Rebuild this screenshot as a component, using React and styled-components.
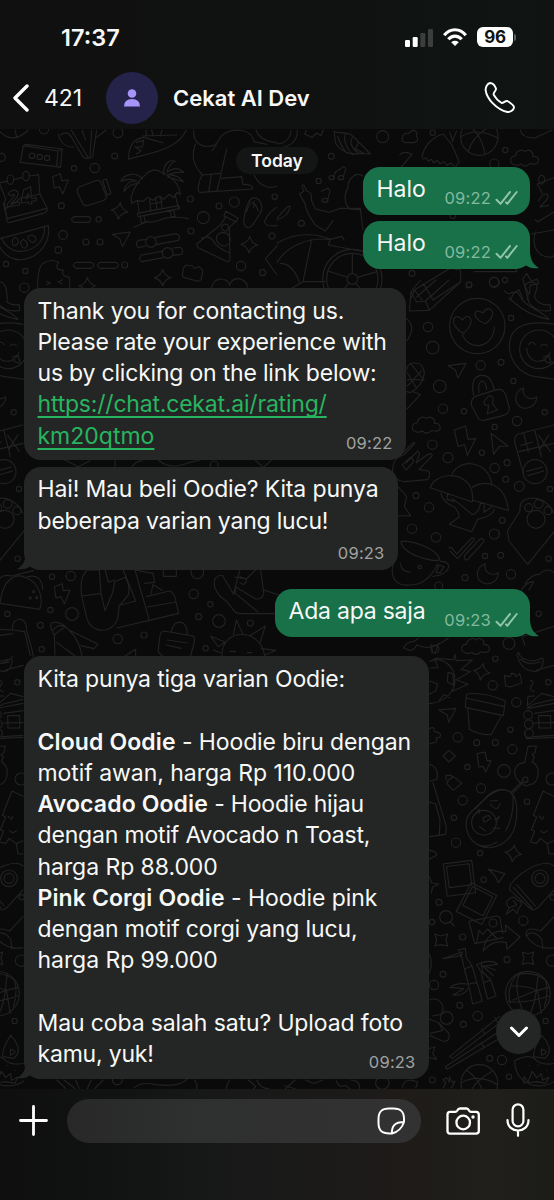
import React from "react";
import styled, { createGlobalStyle } from "styled-components";

const GlobalStyle = createGlobalStyle`
  * {
    box-sizing: border-box;
  }
  body {
    margin: 0;
    background: #0a0a0a;
    font-family: Inter, "Liberation Sans", sans-serif;
    color: #f7f8f7;
  }
`;

const Screen = styled.div`
  width: 554px;
  height: 1200px;
  display: flex;
  flex-direction: column;
  overflow: hidden;
`;

const Header = styled.header`
  height: 129px;
  flex: none;
  background: linear-gradient(90deg, #101010 0%, #101111 55%, #0f1412 85%, #101312 100%);
`;

const StatusBar = styled.div`
  height: 69px;
  padding: 5px 38px 0 61px;
  display: flex;
  align-items: center;
  justify-content: space-between;
`;

const Clock = styled.span`
  font-size: 23.5px;
  font-weight: 600;
  letter-spacing: 0;
`;

const StatusIcons = styled.div`
  display: flex;
  align-items: center;
`;

const Battery = styled.div`
  width: 36px;
  height: 20px;
  margin-left: 10px;
  border-radius: 6px;
  background: #fff;
  color: #101312;
  font-size: 17px;
  font-weight: 700;
  letter-spacing: -0.4px;
  line-height: 20px;
  text-align: center;
`;

const BatteryCap = styled.div`
  width: 2px;
  height: 7px;
  margin-left: 1px;
  border-radius: 0 3px 3px 0;
  background: #5b5e5d;
`;

const NavBar = styled.div`
  height: 58px;
  padding: 0 38px 0 12px;
  display: flex;
  align-items: center;
`;

const UnreadCount = styled.span`
  flex: none;
  width: 77px;
  padding-left: 15px;
  font-size: 23px;
  letter-spacing: -0.1px;
`;

const Avatar = styled.div`
  flex: none;
  width: 52px;
  height: 52px;
  border-radius: 50%;
  background: #25234a;
  display: flex;
  align-items: center;
  justify-content: center;
`;

const ContactName = styled.h1`
  flex: 1;
  margin: 0 0 0 15px;
  font-size: 22px;
  font-weight: 600;
  letter-spacing: 0;
`;

const Chat = styled.main`
  position: relative;
  height: 960px;
  padding: 18px 24px 0;
  display: flex;
  flex-direction: column;
  background: #0a0a0a;
`;

const Wallpaper = styled.svg`
  position: absolute;
  top: 0;
  left: 0;
  fill: none;
  stroke: #222222;
  stroke-width: 3.4;
  stroke-linecap: round;
  stroke-linejoin: round;
`;

const DayPill = styled.div`
  position: relative;
  align-self: center;
  width: 82px;
  height: 27px;
  margin-bottom: -7px;
  border-radius: 14px;
  background: #131615;
  font-size: 17.5px;
  font-weight: 600;
  line-height: 27px;
  text-align: center;
`;

const Bubble = styled.div`
  position: relative;
  display: flex;
  flex-shrink: 0;
  margin-bottom: ${props => props.$gap || 7}px;
  border-radius: 17px;
  font-size: 23px;
`;

const SentBubble = styled(Bubble)`
  align-self: flex-end;
  width: ${props => props.$width}px;
  height: 47.5px;
  padding: 0 12px 0 13.5px;
  justify-content: space-between;
  background: #187149;
`;

const ReceivedBubble = styled(Bubble)`
  align-self: flex-start;
  width: ${props => props.$width}px;
  padding: 7.5px 13.5px 6.5px;
  flex-direction: column;
  background: #242625;
`;

const TailShape = styled.svg`
  position: absolute;
  bottom: 0;
  ${props => (props.$left ? "left: -7px; transform: scaleX(-1);" : "right: -9px;")}
  fill: ${props => (props.$left ? "#242625" : "#187149")};
`;

const SentText = styled.span`
  position: relative;
  line-height: 45px;
  letter-spacing: ${props => props.$spacing || 0}px;
`;

const Meta = styled.span`
  position: relative;
  display: flex;
  align-items: center;
  align-self: flex-end;
  gap: 4px;
  height: 20px;
  margin-bottom: 6.5px;
  font-size: 16.5px;
  letter-spacing: 0.2px;
  color: #84b99e;
`;

const Line = styled.div`
  position: relative;
  height: 31.27px;
  line-height: 31.27px;
  white-space: nowrap;
  letter-spacing: ${props => props.$spacing || 0}px;
`;

const Link = styled.a`
  color: #27b560;
  text-decoration: underline;
  text-decoration-thickness: 1.6px;
  text-underline-offset: 3.5px;
  text-decoration-skip-ink: none;
`;

const Strong = styled.strong`
  font-weight: 600;
  letter-spacing: 0.12px;
`;

const Time = styled.time`
  align-self: flex-end;
  height: 20px;
  margin-top: ${props => (props.$ownRow ? 6.5 : -18.4)}px;
  font-size: 16.5px;
  letter-spacing: 0.2px;
  line-height: 20px;
  color: #a0a2a1;
`;

const ScrollButton = styled.button`
  position: absolute;
  right: 13px;
  bottom: 35px;
  width: 45px;
  height: 45px;
  padding: 0;
  border: 0;
  border-radius: 50%;
  background: #242625;
  display: flex;
  align-items: center;
  justify-content: center;
`;

const Footer = styled.footer`
  height: 111px;
  flex: none;
  padding: 10px 23px 0 19px;
  display: flex;
  align-items: flex-start;
  background: linear-gradient(90deg, #0f0f0f 0%, #111212 20%, #161817 35%, #1b1a19 60%, #1e1b19 72%, #201f1b 88%, #1c1c19 100%);
`;

const Input = styled.div`
  width: 354px;
  height: 44px;
  margin: 0 25px 0 19px;
  padding-right: 16px;
  border-radius: 22px;
  background: linear-gradient(90deg, #282828 0%, #2e2f2f 35%, #333232 100%);
  display: flex;
  align-items: center;
  justify-content: flex-end;
`;

const Icon = styled.svg`
  flex: none;
  fill: none;
  stroke: #fff;
  stroke-width: ${props => props.$weight || 2};
  stroke-linecap: ${props => (props.$butt ? "butt" : "round")};
  stroke-linejoin: round;
  margin-top: ${props => props.$top || 0}px;
  margin-left: ${props => props.$left || 0}px;
`;

const TickIcon = styled(Icon)`
  stroke: #92c4aa;
`;

const Dots = ({ items }) =>
  items.map(([x, y, r]) => <circle key={`${x}-${y}`} cx={x} cy={y} r={r} />);

const Sparkle = ({ x, y, turn = 0 }) => (
  <path
    transform={`translate(${x} ${y}) rotate(${turn})`}
    d="M0-25Q5-6 25 0Q6 5 0 25Q-5 6-25 0Q-6-5 0-25Z"
  />
);

const Bolt = ({ x, y }) => (
  <path transform={`translate(${x} ${y})`} d="M-23-22L0-31L4-10L24-12L7 30L-3 8L-18 12Z" />
);

const Cloud = ({ x, y }) => (
  <path
    transform={`translate(${x} ${y})`}
    d="M-30 22C-47 16-43-4-27-4C-24-20-9-27 2-17C13-29 29-15 25-3C46-5 48 19 32 20C24 22 19 17 16 19C7 29-5 28-10 20C-18 24-24 25-30 22Z"
  />
);

const Moon = ({ x, y }) => (
  <path transform={`translate(${x} ${y})`} d="M-8-30C-38-20-40 18-12 29C8 36 31 20 31-3C8 10-15-7-8-30Z" />
);

const Cursor = ({ x, y, turn = 0 }) => (
  <path transform={`translate(${x} ${y}) rotate(${turn})`} d="M-27-13L27-20L3 24L-5 0Z" />
);

const Ball = ({ x, y, r }) => (
  <g transform={`translate(${x} ${y})`}>
    <circle r={r} />
    <path d={`M${-r * 0.7} ${-r * 0.7}Q8-8 ${r * 0.3} ${r * 0.94}M${r * 0.75} ${-r * 0.65}Q-20-5 ${-r * 0.6} ${r * 0.8}M${-r} 0Q-5-30 ${r} 5`} />
  </g>
);

const Photo = ({ x, y, turn }) => (
  <g transform={`translate(${x} ${y}) rotate(${turn})`}>
    <path d="M-43-46H43V52H-43ZM-34-37H34V27H-34Z" />
  </g>
);

// Doodles are drawn at 3x in bands that follow the height of the chat.
const TopDoodles = () => (
  <g transform="translate(0 1) scale(0.33333)">
    <path d="M70 47L78 43L187 57L181 112L170 110L61 97ZM70 47L174 63L170 110M174 63L187 57" />
    <path d="M0 158L22 154M41 149L66 143M87 138L116 134Q118 180 120 192L141 234Q144 245 130 250L28 278Q19 279 21 266L13 219M120 192Q75 202 62 204L28 230L13 237M0 164L17 206L11 221L21 266L140 235" />
    <ellipse cx="31" cy="149" rx="10" ry="14" />
    <ellipse cx="78" cy="138" rx="10" ry="14" />
    <path d="M24 193C35 171 66 180 50 203L33 220L57 216L59 225L22 231L22 222L43 198Q45 186 34 198ZM71 179L92 170L94 205L109 203L108 212L94 215L96 222L87 222L85 216L64 219V212ZM77 205L85 204V190Z" />
    <path d="M0 326L145 287C159 375 42 430 0 351M5 325C35 397 140 360 133 292M40 346C30 325 50 315 54 330C57 340 50 350 40 346ZM65 348Q57 335 70 328Q90 342 78 353Q69 357 65 348ZM88 332Q76 317 97 315Q116 325 104 335Q96 340 88 332Z" />
    <Bolt x={181} y={162} />
    <path d="M232 186Q230 172 245 168L291 151Q300 150 304 160L318 197Q321 209 308 212L261 227Q250 227 246 216ZM308 151L319 147L333 190L322 196Z" />
    <path d="M175 12Q183 52 221 51M182 15Q200 0 214 20L249 80Q265 91 278 79L290 0M214 0L265 84M246 0L257 30M275 0L270 80M290 22L318 0" />
    <path d="M386 88C385 44 405 25 432 22L490 39M386 88C440 70 533 62 559 0M409 37L431 31L427 51L405 51L423 63L409 72M428 18L530 15M438 0L439 18M455 0L459 18M486 0L481 18" />
    <path d="M393 202Q406 157 436 135Q459 111 484 127Q538 151 541 194L532 187L521 203L507 193L491 208L475 199L459 211L443 202L430 214L411 212L395 220ZM428 147C404 120 370 137 363 154Q388 143 410 153Q377 151 372 184Q390 160 419 159M490 134C491 101 507 87 526 94Q507 101 501 127Q529 105 551 127Q527 124 506 134Q538 136 550 155L503 141M412 210L418 249M525 193L536 234M412 250L536 227L539 236L415 260ZM421 259L424 279L436 277L432 257M510 240L514 261L525 259L521 238M449 208L452 239M466 202L471 236M482 199L486 232M450 222L486 216M402 292L440 275Q460 280 494 265Q530 258 564 266" />
    <Sparkle x={358} y={243} turn={8} />
    <Sparkle x={748} y={344} turn={3} />
    <Sparkle x={488} y={443} />
    <Sparkle x={262} y={468} />
    <path d="M222 260H267Q277 268 267 277H222Q207 268 222 260ZM228 397H273Q290 405 273 415H228Q212 406 228 397ZM300 397H347Q363 405 347 415H300Q285 406 300 397Z" />
    <Cursor x={364} y={326} />
    <path d="M415 331L440 328M467 322L528 311Q544 316 535 331L468 344M436 348L416 353Q402 343 415 331M424 375L486 364M519 354L540 352Q554 359 544 373L520 376M490 383L426 395Q413 389 424 375" />
    <circle cx="453" cy="336" r="16" /><circle cx="503" cy="369" r="16" />
    <path d="M677 244L714 264L709 276L672 258ZM676 262L661 285L590 342Q590 352 601 356L682 395Q691 396 690 384L688 293L706 274M604 325Q627 312 642 336Q650 353 688 368M667 307C636 313 650 350 674 348C698 344 698 311 667 307M673 283C659 287 665 305 679 303C691 298 686 280 673 283" />
    <path d="M731 270Q739 217 756 204C785 199 790 235 781 249L757 286C744 298 731 293 731 270ZM740 244Q756 193 775 243M762 213L761 233M831 232Q807 244 793 276Q796 290 831 287" />
    <path d="M547 438L550 414L558 405L578 408L583 415L597 410L608 421L604 448Q600 455 591 453L553 443Z" />
    <path d="M581 0C579 40 606 57 642 46C658 36 654 26 670 13C700-8 756-4 762 35L800 43M586 42C571 84 584 110 607 135L663 130L680 57M607 135C596 150 590 184 600 187L758 177Q758 162 729 163L725 140L665 145M626 185L634 133M651 182L663 133M636 62L649 45M762 135C780 171 810 177 831 169M768 0Q778 32 831 38" />
    <path d="M115 510Q108 425 126 402Q152 384 176 397Q160 420 190 420Q181 439 208 442L211 510M140 454L151 460L139 464M187 449L175 456L187 462M143 480L154 479" />
    <path d="M635 510C620 430 687 440 689 466C697 429 760 446 740 498M318 480H382M393 480H454M0 456Q20 455 22 510M831 348L796 386L831 435M0 5Q40 45 84 0M45 0L50 22" />
    <Dots items={[[96, 77, 8], [119, 81, 8], [141, 84, 8], [4, 82, 12], [222, 115, 8], [284, 114, 14], [344, 78, 9], [354, 8, 15], [132, -2, 14], [184, 227, 9], [296, 268, 8], [189, 315, 13], [258, 336, 9], [300, 336, 9], [175, 360, 10], [374, 405, 9], [18, 402, 8], [76, 423, 8], [73, 473, 14], [571, 207, 9], [703, 216, 15], [657, 228, 9], [610, 263, 18], [573, 303, 9], [816, 318, 9], [723, 408, 14], [788, 428, 9], [824, 200, 8]]} />
  </g>
);

const UpperRightDoodles = () => (
  <g transform="translate(277 1) scale(0.33333)">
    <path d="M88 0L83 12L105 22L119 9L132 17L139 0M171 4C184 12 209 5 225 16L263 54L280 72L248 70C213 78 185 56 176 39ZM182 18Q190 47 210 71M204 13Q197 38 226 75M227 21Q211 44 244 69M244 38L235 56L259 69M61 0Q62 50 0 55M42 0Q39 39 0 42" />
    <path d="M377 22Q378 8 395 10L408 0Q424 5 418 18Q430 33 409 38H386Q369 33 377 22M435 82Q442 38 484 17L499 12L526 47L547 96L536 109M438 88L448 84L454 94L463 88L470 98L481 91L489 101L501 95L511 106L521 99L530 107M525 36L539 3M518 5L526 30" />
    <Ball x={607} y={20} r={56} />
    <Cloud x={742} y={82} />
    <path d="M730 0Q735 25 774 24L825 0M175 126L200 110L207 116L199 139M175 126L169 145M133 184L154 174L159 184L150 215" />
    <ellipse cx="164" cy="143" rx="8" ry="6" /><ellipse cx="192" cy="143" rx="8" ry="6" /><ellipse cx="144" cy="211" rx="9" ry="6" />
    <path d="M80 215L68 191L80 184L75 166Q82 160 88 183Q106 185 103 210L115 237L157 247L190 235H250L258 300M82 215Q88 249 116 286L145 303L168 272M258 138C231 122 211 153 213 174C201 190 200 220 218 237L247 239M0 340C56 302 130 313 160 328C86 322 29 350 0 397M160 328L154 345L250 363M160 328L194 319L201 329M104 328L78 455L0 500M78 455H145" />
    <circle cx="226" cy="447" r="89" /><circle cx="226" cy="447" r="77" /><circle cx="226" cy="447" r="16" />
    <path d="M226 431V370M241 442L300 425M236 460L272 501M215 459L185 500M210 441L152 423M368 75Q380 60 405 73L371 113M0 265L26 235Q42 222 38 234Q35 257 0 270M10 400Q47 400 68 458" />
    <path d="M400 510L412 480L519 415L551 420V455L468 510M412 480L435 510M440 462L468 510M592 425H720L712 410M700 510L710 489L726 479L737 505M749 431L737 447L744 468L754 489L751 510M749 431L764 454L780 447L785 461L759 466L758 492" />
    <path d="M781 162L831 143M781 162L796 190M785 213C796 188 820 184 811 207L789 231L815 226M831 246L781 276L775 268M775 306C755 385 831 390 831 374M762 312L831 300" />
    <ellipse cx="794" cy="149" rx="9" ry="13" />
    <Dots items={[[317, 20, 18], [163, 79, 9], [125, 153, 8], [73, 280, 9], [685, 60, 8], [652, 101, 14], [467, 8, 8], [405, 430, 9], [576, 464, 8], [651, 456, 14], [684, 450, 8], [527, 258, 8]]} />
  </g>
);

const RightDoodles = () => (
  <g transform="translate(377 151) scale(0.33333)">
    <path d="M102 35L97 93L157 91L247 9M102 35L131 0M157 91L145 63L119 66L102 35M119 51L177 0M145 63L216 0" />
    <circle cx="301" cy="138" r="83" />
    <path d="M259 160C212 135 229 90 257 120C274 92 303 124 259 160ZM325 131C280 116 289 79 318 99C335 68 370 101 325 131ZM256 163C274 213 349 209 352 140" />
    <path d="M382 32Q394 47 403 38Q424 32 430 50C448 85 492 89 516 118Q455 107 413 69L395 53M444 22C445 0 481 2 480 24L472 49Q484 79 519 74L521 91Q480 99 456 69Z" />
    <path d="M531 133C450 119 397 139 397 199C398 238 424 282 476 290L560 301" />
    <circle cx="486" cy="208" r="58" />
    <path d="M455 193Q465 180 475 194M492 198Q501 186 511 198M449 205C452 255 505 254 519 218M499 231L516 225L522 246Q511 254 501 237" />
    <Cursor x={240} y={270} />
    <path d="M89 270Q91 248 112 249Q139 247 142 280Q139 315 100 338L89 335M90 387L130 344L109 335M91 299L142 300M91 318L134 272M100 250L137 295M91 278L119 325" />
    <path d="M283 376Q281 353 301 347L360 329Q378 325 386 344L397 384Q397 402 377 407L321 421Q305 423 299 406ZM290 346C281 305 293 286 316 286Q337 286 346 310L352 330M306 338Q301 306 316 303Q326 304 329 328M328 356C313 369 326 378 335 376L331 401L361 390L346 371C355 346 336 342 328 356Z" />
    <Moon x={448} y={354} />
    <Cloud x={147} y={433} />
    <path d="M232 450L266 438L273 478L296 476L271 526L263 494L243 499ZM342 460L393 498L367 499L350 523Z" />
    <path d="M47 565Q50 532 80 525L112 492Q116 484 106 490L61 535M89 547L122 513L128 520L118 548L153 523Q168 519 165 528L126 568L153 573Q164 581 152 599L83 605Q43 600 47 565M76 555L102 531L111 544L87 570Z" />
    <path d="M531 435L424 462Q412 466 413 486L439 580M440 460L454 515M474 453L493 530M426 515L531 490M432 496L467 486M485 466L520 514M515 465L490 506" />
    <circle cx="474" cy="575" r="36" /><path d="M449 574L496 561M453 587L500 573" />
    <path d="M160 623C174 580 246 573 278 616Q290 638 286 666ZM225 583C245 535 331 539 344 610M286 622C320 598 385 606 394 691L286 660M191 640Q199 668 233 681Q249 703 246 712L217 733L284 755L302 718Q349 707 352 687M225 655L249 673L286 704Q307 698 311 668M212 640L210 658L232 664M322 674L321 697L344 681" />
    <path d="M391 753L429 693Q425 657 464 654Q509 654 529 698M391 753L396 783L452 853L540 745" />
    <circle cx="477" cy="718" r="27" /><circle cx="455" cy="683" r="12" /><circle cx="485" cy="672" r="13" /><circle cx="513" cy="692" r="12" />
    <path d="M217 805Q214 800 224 803L239 822L283 775Q292 771 292 780L242 836L219 813M262 827L310 776Q321 774 321 785L272 839Q262 843 262 827" />
    <path d="M72 785C89 777 180 802 188 840C165 847 76 823 72 785ZM60 821C22 901 70 919 93 915Q151 918 182 852M190 844Q213 844 215 858Q213 883 168 889M177 878L186 855L201 860L190 878ZM70 850Q74 878 101 876" />
    <circle cx="128" cy="861" r="5" />
    <path d="M63 620L89 650L82 680L101 707L63 708M88 115Q119 140 90 182M430 940Q440 907 470 905L456 930M445 910Q464 882 487 883Q510 860 531 878" />
    <Moon x={333} y={881} />
    <Dots items={[[153, 141, 14], [167, 203, 19], [352, 7, 15], [276, 15, 9], [402, 114, 8], [311, 256, 14], [372, 247, 9], [188, 319, 19], [409, 303, 8], [198, 386, 14], [261, 394, 8], [353, 441, 8], [420, 423, 14], [166, 494, 14], [213, 533, 15], [315, 518, 8], [353, 564, 14], [390, 548, 9], [386, 598, 9], [427, 619, 15], [117, 647, 9], [156, 682, 14], [376, 721, 9], [105, 746, 14], [177, 772, 14], [352, 762, 15], [324, 828, 8], [371, 826, 9], [264, 893, 9], [402, 883, 14], [515, 836, 8], [503, 397, 8], [519, 627, 8]]} />
  </g>
);

const MiddleLeftDoodles = () => (
  <g transform="translate(0 311) scale(0.33333)">
    <path d="M195 60L235 80L270 62M345 60V81M395 82Q410 60 428 63M475 60Q510 92 570 67L600 60M765 60L790 82L815 60M0 415Q10 402 34 408L100 392" />
    <path d="M0 490C7 418 46 397 79 413C119 427 130 478 120 506Q115 509 106 506L0 490M82 410Q125 400 128 448" />
    <Bolt x={186} y={462} />
    <path d="M298 390H262C240 410 242 440 245 468L258 525C266 579 334 589 353 535L358 495M298 390L303 460L315 512L339 455L344 425L376 412Q390 435 386 463L362 493M245 468L300 461M316 390L325 427L344 420M370 390L407 483L361 495M405 390L448 541L350 564M405 390L459 400L464 427L433 430M439 470L508 453Q523 456 528 485L536 520L448 541M443 501L528 486M453 462L459 434L486 451M490 390V409H529V390" />
    <path d="M720 390L706 440L767 477Q790 478 791 458L782 390M720 428Q738 442 739 417L720 410M704 411L739 417L767 390M706 440L701 463L668 407Q637 403 644 442Q655 470 679 483L706 517L720 521H840M706 440V460L774 516M789 449L840 466" />
    <path d="M0 568L38 570Q35 540 60 537Q80 540 79 569L95 625L100 650M38 570L74 575L91 647M0 586L38 581M0 671Q20 667 38 650" />
    <path d="M165 645L163 585Q140 544 166 547Q185 546 207 570L294 613L282 626L242 617M160 570Q180 544 207 570M164 585Q182 568 192 564M207 570Q238 600 246 648M170 607L225 648M375 648L407 628V648" />
    <path d="M492 573L579 588Q585 592 583 605L572 648M492 573Q483 574 480 587L474 635L487 648M514 576Q521 542 545 547Q562 556 562 584M502 600L562 609M498 615L544 625" />
    <path d="M666 648C663 562 784 562 794 648M632 589L675 606L655 620ZM700 585L709 540L728 581M750 587L796 558L779 611M784 626L828 631L795 645M640 630L665 640M690 634L707 635M742 638L756 638" />
    <Dots items={[[156, 410, 8], [212, 408, 14], [151, 510, 8], [216, 522, 19], [121, 556, 9], [353, 597, 14], [432, 585, 9], [125, 628, 8], [581, 462, 14], [631, 493, 8], [596, 530, 9], [657, 543, 19], [751, 549, 9], [617, 625, 8], [592, 397, 19], [643, 75, 12], [101, 455, 3], [91, 474, 3], [110, 473, 3], [22, 522, 8]]} />
  </g>
);

const LowerRightDoodles = () => (
  <g transform="translate(400 451) scale(0.33333)">
    <path d="M10 205Q20 185 42 184L56 174M15 205Q37 221 51 194Q88 218 145 174M93 193L98 216M116 190L106 218" />
    <Cloud x={226} y={197} />
    <Sparkle x={245} y={275} turn={10} />
    <Sparkle x={340} y={820} turn={8} />
    <path d="M88 245C117 229 154 249 163 283C173 326 142 366 88 371M88 245L109 235L160 239L165 223L168 242L217 240L183 268L211 275L169 299L204 313L157 334M105 239L114 263L91 264M88 303L113 311L107 333L88 342M144 277L158 281L162 316L142 305ZM118 360L132 344L150 353" />
    <path d="M363 160L374 195M462 139L370 169M355 217Q362 240 401 243L428 234M355 217L351 222Q362 275 407 274Q428 271 430 240L427 233M362 237Q382 258 421 246M410 270L462 256M390 300Q405 304 395 317T402 335" />
    <path d="M313 287L331 290L334 280Q347 280 348 290L359 281Q364 295 365 309L330 321L317 317ZM116 390L168 385L146 427L142 405Z" />
    <path d="M198 354L200 342Q254 335 316 363L310 407L196 382ZM198 354L314 380M203 384L208 447Q238 466 273 464L303 410" />
    <path d="M462 350L425 340L382 377L384 349L404 348M381 384L403 372L462 358M384 385L462 370M403 400L462 392M402 429L462 428M400 470L462 466M416 407H452V444H417ZM374 457L379 476L462 472" />
    <circle cx="384" cy="405" r="13" /><circle cx="386" cy="433" r="13" /><circle cx="387" cy="460" r="13" />
    <path d="M88 447Q103 436 103 455Q128 458 119 472L108 474Q114 487 102 488L88 492M147 511L166 528L147 546L129 528ZM231 521L255 516L261 542L273 542L257 576L249 559L237 561ZM145 600L161 590L185 610L160 631L141 611ZM138 600V586L153 586L158 592" />
    <path d="M344 628L333 637L365 605M371 613C336 601 333 550 374 548L384 499L409 498L405 518L396 524L403 531L397 545C428 565 413 615 390 613Q376 623 371 613M335 643L369 608" />
    <circle cx="376" cy="599" r="8" />
    <path d="M305 628C342 629 355 660 349 717C342 790 276 818 237 796C200 780 185 726 213 696L254 657Q276 630 305 628M316 629C282 627 255 656 226 687M339 644Q343 707 317 752M290 786Q260 806 230 793" />
    <circle cx="252" cy="728" r="37" />
    <path d="M270 663L292 662M271 672Q292 700 300 670M249 714Q269 698 272 717M249 714Q250 735 267 718M237 739L256 752M217 712L238 688L238 700M285 718L298 710L290 724M279 744L299 745" />
    <path d="M462 649L429 633L400 706L410 711L394 750L404 753L391 786L410 790L421 775L441 791L462 782M442 790L447 822H462M417 708L427 718L432 709M421 751L431 759L442 752" />
    <path d="M89 553Q119 565 110 599L90 603M99 608L139 740L137 763L90 770M88 666L107 672L120 720L118 766M88 811Q113 815 110 826L88 838" />
    <Dots items={[[327, 190, 18], [286, 236, 8], [105, 208, 12], [278, 316, 14], [445, 307, 8], [349, 367, 14], [331, 449, 8], [173, 472, 14], [230, 488, 9], [286, 488, 9], [337, 508, 14], [202, 561, 8], [312, 573, 19], [456, 597, 18], [243, 625, 14], [188, 661, 14], [381, 665, 8], [162, 713, 8], [168, 788, 14], [240, 820, 8], [416, 101, 8], [116, 18, 12]]} />
  </g>
);

const BottomRightDoodles = () => (
  <g transform="translate(400 731) scale(0.33333)">
    <Photo x={178} y={52} turn={-7} />
    <Photo x={231} y={128} turn={27} />
    <path d="M265 27L315 41L295 68L286 49ZM328 89L332 72C377 19 440-3 462 18M328 89L389 144Q402 157 417 139L462 90M340 82L396 144M349 73L406 138" />
    <circle cx="420" cy="55" r="25" /><circle cx="420" cy="55" r="15" />
    <path d="M327 118Q340 104 350 119L362 125Q368 136 357 143L351 160L340 147L319 163L327 143Q312 126 327 118M340 121L350 135L327 143" />
    <circle cx="138" cy="171" r="19" /><path d="M151 186L163 198M207 184L290 168Q301 170 301 180L308 220M207 184L224 251L310 233M230 247L237 211L249 223L263 207L289 234" />
    <circle cx="279" cy="189" r="12" />
    <path d="M250 273C253 235 280 207 318 215L316 195L360 231L321 268L319 248Q277 238 250 273Z" />
    <path d="M105 222L122 228L143 222L138 240L143 258L122 254L105 258L110 241ZM367 276L384 282L401 276L396 294L401 313L384 309L367 313L372 294Z" />
    <path d="M88 50L95 69L117 72L98 81L94 98M379 228C376 205 393 202 422 213L462 170M379 228Q410 272 462 263M379 228Q397 205 425 237L429 267M88 283Q100 310 88 338" />
    <path d="M175 270L196 265L199 293L216 318L193 327L186 294ZM128 296L187 276L184 287ZM193 327L205 372L231 368L216 318M205 372L218 432L247 423L231 368M230 313L243 309L248 336L272 360L250 368L244 338ZM250 368L263 417L288 408L272 360M244 308Q277 298 293 313L252 318M252 318L288 331M248 318L280 347M203 372Q168 367 150 382L191 386L159 405Q191 408 204 386" />
    <circle cx="384" cy="401" r="67" />
    <path d="M350 345Q396 330 437 361Q447 396 433 441M350 345Q318 383 331 430M335 378Q390 377 409 392L447 382M362 337Q337 371 366 447M414 343L409 392Q404 433 390 461M339 420L412 390L424 460M325 423Q369 433 447 408" />
    <path d="M299 469L149 589L157 596L300 488M285 473L294 489M244 507L255 521M290 520L136 620L142 628L299 535M244 548L252 564M105 560L88 566M105 560L98 580L110 598L88 593" />
    <Ball x={238} y={669} r={55} />
    <path d="M88 420C120 408 139 440 123 463L98 468M91 527L126 542Q150 550 147 521L116 488M88 478L116 488L128 511L91 520M130 684L137 667L129 659L140 653L148 667L148 650L157 667L165 663L158 679L152 684M8 684Q7 661 33 660L53 666L47 684" />
    <path d="M425 526C447 550 459 575 434 595L401 590Q399 565 425 526M424 568Q452 573 424 586ZM344 602Q390 578 410 602Q440 621 480 605M344 602C345 705 490 696 486 616M372 650L384 665L397 634L410 653L424 641L428 661L447 651L438 670L410 665L371 669ZM388 616V617M414 615V616M439 630V631" />
    <Dots items={[[251, 59, 8], [117, 127, 9], [188, 231, 9], [370, 182, 14], [321, 299, 9], [456, 302, 17], [129, 343, 9], [102, 375, 14], [179, 436, 9], [233, 468, 14], [140, 474, 19], [190, 493, 9], [437, 483, 8], [269, 595, 9], [306, 600, 14], [327, 650, 8], [97, 660, 9], [458, 112, 8], [96, 186, 8]]} />
  </g>
);

const BottomEdgeDoodles = () => (
  <g transform="translate(0 931) scale(0.35336 0.33333)">
    <path d="M161 60L186 86M181 60L213 86M214 60L224 86M247 86L258 60M268 86L292 60M380 83Q400 64 440 74Q508 82 529 58M551 60Q560 76 557 86M640 86Q643 70 650 60M703 60L724 80L718 86M727 60Q736 86 760 86M808 86L835 60M806 77L835 86M865 60L886 70L900 66L913 60M952 63Q960 86 977 76L990 86M994 60Q1020 62 1018 86" />
    <Dots items={[[332, 60, 14], [1082, 69, 19]]} />
  </g>
);

// The pattern repeats every 531px, so the left margin reuses the right side.
const ChatWallpaper = () => (
  <Wallpaper width="554" height="960">
    <defs>
      <g id="doodles">
        <UpperRightDoodles />
        <RightDoodles />
        <LowerRightDoodles />
        <BottomRightDoodles />
      </g>
    </defs>
    <use href="#doodles" />
    <svg y="172" width="24" height="268">
      <use href="#doodles" x="-531" y="-172" />
    </svg>
    <svg y="530" width="24" height="430">
      <use href="#doodles" x="-531" y="-530" />
    </svg>
    <TopDoodles />
    <MiddleLeftDoodles />
    <BottomEdgeDoodles />
  </Wallpaper>
);

const Tail = ({ left }) => (
  <TailShape $left={left} width="28" height="32" viewBox="0 0 28 32">
    <path d="M0 13H19C19 22 21.5 27 28 31C24 31.9 19 31.2 15 28.4C11 31.4 6 32 0 32Z" />
  </TailShape>
);

const Ticks = () => (
  <TickIcon width="23" height="16" viewBox="0 0 23 16" $weight={2}>
    <path d="M1.5 9.8L5.5 13.8L15 2M11 12.4L12.3 13.8L21.7 2" />
  </TickIcon>
);

const Sent = ({ text, time, width, spacing, gap, tail }) => (
  <SentBubble $width={width} $gap={gap}>
    {tail && <Tail />}
    <SentText $spacing={spacing}>{text}</SentText>
    <Meta>
      {time}
      <Ticks />
    </Meta>
  </SentBubble>
);

const Received = ({ lines, time, width, gap, tail, ownRow }) => (
  <ReceivedBubble $width={width} $gap={gap}>
    {tail && <Tail left />}
    {lines.map(({ bold, link, text, spacing }, index) => (
      <Line key={index} $spacing={spacing}>
        {bold && <Strong>{bold}</Strong>}
        {link ? <Link>{link}</Link> : text}
      </Line>
    ))}
    <Time $ownRow={ownRow}>{time}</Time>
  </ReceivedBubble>
);

const ratingLines = [
  { text: "Thank you for contacting us.", spacing: -0.15 },
  { text: "Please rate your experience with", spacing: -0.2 },
  { text: "us by clicking on the link below:", spacing: -0.2 },
  { link: "https://chat.cekat.ai/rating/", spacing: -0.2 },
  { link: "km20qtmo" }
];

const greetingLines = [
  { text: "Hai! Mau beli Oodie? Kita punya", spacing: -0.14 },
  { text: "beberapa varian yang lucu!", spacing: -0.2 }
];

const variantLines = [
  { text: "Kita punya tiga varian Oodie:", spacing: -0.17 },
  { text: "" },
  { bold: "Cloud Oodie", text: " - Hoodie biru dengan", spacing: -0.12 },
  { text: "motif awan, harga Rp 110.000", spacing: -0.05 },
  { bold: "Avocado Oodie", text: " - Hoodie hijau", spacing: -0.2 },
  { text: "dengan motif Avocado n Toast,", spacing: -0.17 },
  { text: "harga Rp 88.000", spacing: -0.06 },
  { bold: "Pink Corgi Oodie", text: " - Hoodie pink", spacing: -0.06 },
  { text: "dengan motif corgi yang lucu,", spacing: -0.14 },
  { text: "harga Rp 99.000", spacing: -0.06 },
  { text: "" },
  { text: "Mau coba salah satu? Upload foto", spacing: -0.12 },
  { text: "kamu, yuk!", spacing: -0.2 }
];

const App = () => (
  <Screen>
    <GlobalStyle />
    <Header>
      <StatusBar>
        <Clock>17:37</Clock>
        <StatusIcons>
          <svg width="28" height="19" viewBox="0 0 28 19">
            <rect x="0" y="12" width="5" height="7" rx="1.2" fill="#fff" />
            <rect x="7.7" y="9" width="5" height="10" rx="1.2" fill="#fff" />
            <rect x="15.3" y="5" width="5" height="14" rx="1.2" fill="#3c3e3d" />
            <rect x="23" y="1" width="5" height="18" rx="1.2" fill="#3c3e3d" />
          </svg>
          <Icon width="24" height="19" viewBox="0 0 24 19" $weight={3.2} $left={10} $butt>
            <path d="M1.2 7.2C7-.1 17-.1 22.8 7.2M5.3 11.3C9 7 15 7 18.7 11.3" />
            <path d="M12 18L8.2 14.3Q12 11.4 15.8 14.3Z" fill="#fff" stroke="none" />
          </Icon>
          <Battery>96</Battery>
          <BatteryCap />
        </StatusIcons>
      </StatusBar>
      <NavBar>
        <Icon width="17" height="28" viewBox="0 0 17 28" $weight={3.4}>
          <path d="M15 2L3 14L15 26" />
        </Icon>
        <UnreadCount>421</UnreadCount>
        <Avatar>
          <svg width="18" height="20" viewBox="0 0 18 20" fill="#a893f8">
            <circle cx="9" cy="5.5" r="4.3" />
            <path d="M1 18.5Q1 11 9 11T17 18.5Z" />
          </svg>
        </Avatar>
        <ContactName>Cekat AI Dev</ContactName>
        <Icon width="32" height="32" viewBox="252 200 96 96" $weight={5.8}>
          <path d="M270 203C262 205 256 215 257 225C260 250 290 283 322 290C332 291 341 284 342 276C342 270 330 262 322 257C316 255 312 263 305 263C297 258 286 248 281 238C279 232 289 226 288 220C285 212 278 203 270 203Z" />
        </Icon>
      </NavBar>
    </Header>
    <Chat>
      <ChatWallpaper />
      <DayPill>Today</DayPill>
      <Sent text="Halo" time="09:22" width={167} gap={6.5} />
      <Sent text="Halo" time="09:22" width={167} gap={19.5} tail />
      <Received lines={ratingLines} time="09:22" width={382} />
      <Received lines={greetingLines} time="09:23" width={374} gap={19.5} tail ownRow />
      <Sent text="Ada apa saja" time="09:23" width={255} spacing={-0.22} gap={19.5} tail />
      <Received lines={variantLines} time="09:23" width={405} tail />
      <ScrollButton>
        <Icon width="20" height="12" viewBox="0 0 20 12" $weight={3}>
          <path d="M2.5 2L10 9.5L17.5 2" />
        </Icon>
      </ScrollButton>
    </Chat>
    <Footer>
      <Icon width="29" height="31" viewBox="0 0 29 31" $weight={2.8} $top={6}>
        <path d="M14.5 1.5V29.5M1.5 15.5H27.5" />
      </Icon>
      <Input>
        <Icon width="28" height="28" viewBox="0 0 28 28" $weight={2}>
          <path d="M15 26.5H12.5C4.5 26.5 1.5 23.5 1.5 16V12C1.5 4.5 4.5 1.5 12 1.5H16.5C24 1.5 27 4.5 27 12V15C25.5 20 21 25 15 26.5ZM15 26.5C14.5 19.5 17.5 15 27 15" />
        </Icon>
      </Input>
      <Icon width="34" height="28" viewBox="0 0 34 28" $weight={2.3} $top={7.5}>
        <path d="M1.5 7.5Q1.5 4.8 4 4.8H9.2Q10.5 4.8 11.3 3.5Q12.3 1.5 14 1.5H20.5Q22 1.5 23 3.5Q23.7 4.8 25 4.8H30Q32.8 4.8 32.8 7.5V24Q32.8 26.6 30 26.6H4Q1.5 26.6 1.5 24Z" />
        <circle cx="17.2" cy="15.5" r="6.8" />
        <circle cx="27" cy="10" r="1.7" fill="#fff" stroke="none" />
      </Icon>
      <Icon width="24" height="35" viewBox="0 0 24 35" $weight={2.2} $top={3.5} $left={26}>
        <rect x="6.6" y="1.3" width="10.8" height="22" rx="5.4" />
        <path d="M1.5 17C1.5 31 22.5 31 22.5 17M12 27.5V32.8" />
      </Icon>
    </Footer>
  </Screen>
);

export default App;
